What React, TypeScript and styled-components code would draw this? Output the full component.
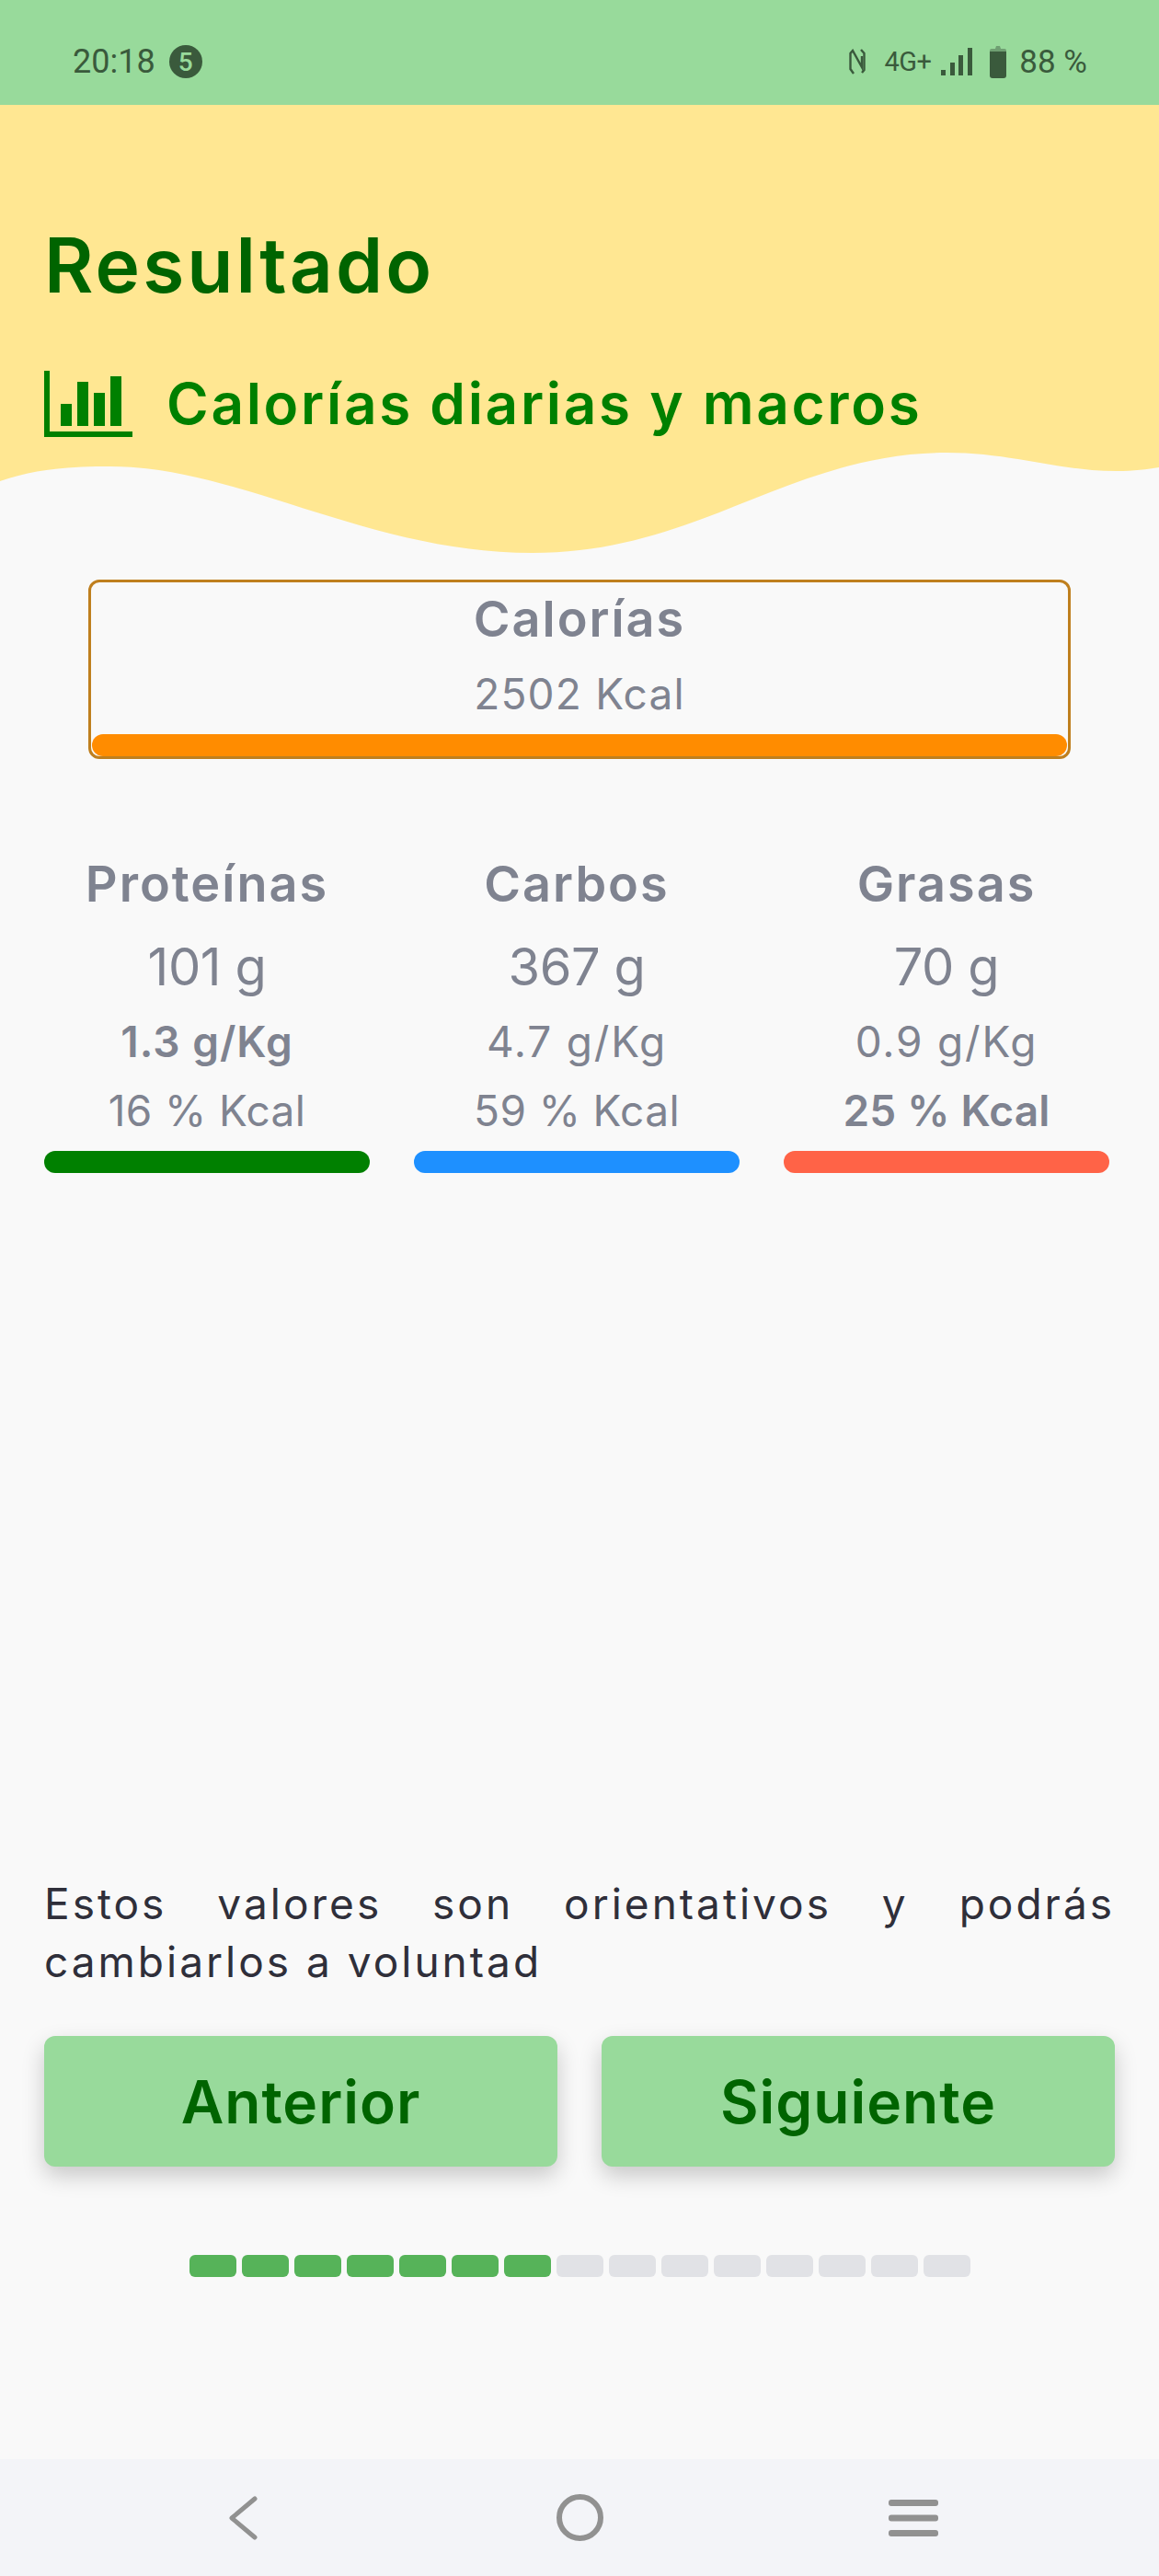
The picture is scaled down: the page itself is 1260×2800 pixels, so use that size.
import * as React from "react"
import styled, { createGlobalStyle } from "styled-components"

const GlobalStyle = createGlobalStyle`
  html, body {
    margin: 0;
    padding: 0;
    background: #f9f9f9;
  }
  * {
    box-sizing: border-box;
  }
`

const Page = styled.div`
  width: 1260px;
  height: 2800px;
  display: flex;
  flex-direction: column;
  background: #f9f9f9;
  font-family: Inter, "Liberation Sans", sans-serif;
`

const StatusBar = styled.div`
  height: 114px;
  flex: none;
  display: flex;
  justify-content: space-between;
  align-items: center;
  padding: 20px 78px 0 79px;
  background: #98da9b;
  color: #3a5a3c;
  font-family: Roboto, sans-serif;
  font-size: 36px;
`

const StatusGroup = styled.div`
  display: flex;
  align-items: center;
`

const StatusItem = styled.span<{ $left?: number }>`
  display: flex;
  align-items: center;
  margin-left: ${props => props.$left || 0}px;
`

const Badge = styled.span`
  width: 36px;
  height: 36px;
  margin-left: 15px;
  border-radius: 50%;
  display: flex;
  justify-content: center;
  align-items: center;
  background: #3a5a3c;
  color: #98da9b;
  font-size: 28px;
  font-weight: 500;
`

const NetLabel = styled(StatusItem)`
  font-size: 29px;
  letter-spacing: -0.6px;
`

const Percent = styled(StatusItem)`
  font-size: 35px;
`

const Header = styled.div`
  position: relative;
  height: 512px;
  flex: none;
  padding: 125px 48px 0;
`

const Wave = styled.svg`
  position: absolute;
  top: 0;
  left: 0;
  width: 1260px;
  height: 512px;
`

const Title = styled.h1`
  position: relative;
  margin: 0;
  font-size: 82px;
  line-height: 100px;
  font-weight: 600;
  letter-spacing: 3.1px;
  color: #006400;
`

const SubtitleRow = styled.div`
  position: relative;
  display: flex;
  align-items: center;
  gap: 37px;
  margin-top: 60px;
`

const Subtitle = styled.h2`
  margin: 0;
  font-size: 62px;
  line-height: 80px;
  font-weight: 600;
  letter-spacing: 2.7px;
  color: #008000;
`

const Body = styled.div`
  flex: 1;
  display: flex;
  flex-direction: column;
  padding: 4px 48px 0;
  color: #7f8390;
`

const CaloriesCard = styled.div`
  position: relative;
  height: 195px;
  margin: 0 48px;
  padding-top: 6px;
  display: flex;
  flex-direction: column;
  align-items: center;
  border: 3px solid #bf7f1e;
  border-radius: 12px;
`

const CardLabel = styled.div`
  font-size: 54px;
  line-height: 68px;
  font-weight: 600;
  letter-spacing: 2px;
`

const CardValue = styled.div`
  margin-top: 17px;
  font-size: 46px;
  line-height: 60px;
  letter-spacing: 1.2px;
`

const CardBar = styled.div`
  position: absolute;
  left: 1px;
  right: 1px;
  bottom: 0;
  height: 24px;
  background: #ff8c00;
  border-radius: 12px;
`

const Macros = styled.div`
  display: grid;
  grid-template-columns: repeat(3, 354px);
  gap: 48px;
  margin-top: 102px;
`

const Macro = styled.div`
  display: flex;
  flex-direction: column;
  align-items: center;
`

const MacroName = styled.div`
  font-size: 54px;
  line-height: 68px;
  font-weight: 600;
  letter-spacing: 2px;
`

const MacroGrams = styled.div`
  margin-top: 21px;
  font-size: 56px;
  line-height: 70px;
  letter-spacing: -0.4px;
`

const MacroRatio = styled.div<{ $bold?: boolean }>`
  margin-top: 9px;
  font-size: 46px;
  line-height: 75px;
  letter-spacing: ${props => (props.$bold ? 1 : 1.8)}px;
  font-weight: ${props => (props.$bold ? 600 : 400)};
`

const MacroShare = styled.div<{ $bold?: boolean }>`
  font-size: 46px;
  line-height: 75px;
  letter-spacing: ${props => (props.$bold ? 0.2 : 0.4)}px;
  font-weight: ${props => (props.$bold ? 600 : 400)};
`

const MacroBar = styled.div<{ $color: string }>`
  width: 100%;
  height: 24px;
  margin-top: 6px;
  border-radius: 12px;
  background: ${props => props.$color};
`

const Note = styled.p`
  margin: auto 0 0;
  font-size: 46px;
  line-height: 63px;
  letter-spacing: 3px;
  text-align: justify;
  color: #2f2f3a;
`

const Buttons = styled.div`
  display: grid;
  grid-template-columns: 1fr 1fr;
  gap: 48px;
  margin-top: 49px;
`

const NavButton = styled.div`
  height: 142px;
  display: flex;
  justify-content: center;
  align-items: center;
  background: #98da9b;
  border-radius: 12px;
  box-shadow: 0 10px 24px rgba(0, 0, 0, 0.2);
  color: #006400;
  font-size: 64px;
  font-weight: 600;
  letter-spacing: 1px;
`

const Progress = styled.div`
  display: flex;
  justify-content: center;
  gap: 6px;
  margin: 96px 0 198px;
`

const Step = styled.div<{ $done?: boolean }>`
  width: 51px;
  height: 24px;
  border-radius: 6px;
  background: ${props => (props.$done ? "#56b359" : "#e1e2e6")};
`

const BottomNav = styled.div`
  height: 127px;
  flex: none;
  display: flex;
  justify-content: center;
  align-items: center;
  background: #f3f4f8;
`

const NavSlot = styled.div`
  width: 363px;
  display: flex;
  justify-content: center;
`

const BackSlot = styled(NavSlot)`
  padding-right: 5px;
`

const macros = [
    { name: "Proteínas", grams: "101 g", perKg: "1.3 g/Kg", kcal: "16 % Kcal", color: "#008000", boldKg: true },
    { name: "Carbos", grams: "367 g", perKg: "4.7 g/Kg", kcal: "59 % Kcal", color: "#1e90ff" },
    { name: "Grasas", grams: "70 g", perKg: "0.9 g/Kg", kcal: "25 % Kcal", color: "#ff6347", boldKcal: true },
]

const ChartIcon = () => (
    <svg width="96" height="72" viewBox="0 0 96 72" fill="#008000">
        <rect x="0" y="0" width="6" height="72" />
        <rect x="0" y="66" width="96" height="6" />
        <rect x="18" y="36" width="12" height="24" />
        <rect x="36" y="12" width="12" height="48" />
        <rect x="54" y="24" width="12" height="36" />
        <rect x="72" y="6" width="12" height="54" />
    </svg>
)

const NfcIcon = () => (
    <svg width="18" height="28" viewBox="0 0 18 28" fill="none" stroke="#3a5a3c" strokeWidth="2.4">
        <path d="M5 27 L1.5 22 V5 L4 2 L14 20 V8" />
        <path d="M13 1 L16.5 5 V23 L14 26" />
    </svg>
)

const SignalIcon = () => (
    <svg width="34" height="30" viewBox="0 0 34 30" fill="#3a5a3c">
        <rect x="0" y="24" width="5" height="6" />
        <rect x="10" y="16" width="5" height="14" />
        <rect x="19" y="8" width="5" height="22" />
        <rect x="29" y="0" width="5" height="30" />
    </svg>
)

const BatteryIcon = () => (
    <svg width="18" height="35" viewBox="0 0 18 35">
        <path d="M0 5 Q0 3 2 3 H6 L7 0 H11 L12 3 H16 Q18 3 18 5 V8 H0 Z" fill="#6f9f72" />
        <path d="M0 6 H18 V32 Q18 35 15 35 H3 Q0 35 0 32 Z" fill="#3a5a3c" />
    </svg>
)

const BackIcon = () => (
    <svg width="32" height="48" viewBox="0 0 32 48" fill="none" stroke="#919191" strokeWidth="5" strokeLinecap="round" strokeLinejoin="round">
        <path d="M28 3 L3 24 L28 45" />
    </svg>
)

const HomeIcon = () => (
    <svg width="51" height="51" viewBox="0 0 51 51" fill="none" stroke="#919191" strokeWidth="6">
        <circle cx="25.5" cy="25.5" r="22.5" />
    </svg>
)

const MenuIcon = () => (
    <svg width="54" height="40" viewBox="0 0 54 40" fill="#919191">
        <rect x="0" y="0" width="54" height="7" rx="3" />
        <rect x="0" y="16.5" width="54" height="7" rx="3" />
        <rect x="0" y="33" width="54" height="7" rx="3" />
    </svg>
)

export default function App() {
    return (
        <Page>
            <GlobalStyle />
            <StatusBar>
                <StatusGroup>
                    <span>20:18</span>
                    <Badge>5</Badge>
                </StatusGroup>
                <StatusGroup>
                    <StatusItem><NfcIcon /></StatusItem>
                    <NetLabel $left={21}>4G+</NetLabel>
                    <StatusItem $left={11}><SignalIcon /></StatusItem>
                    <StatusItem $left={19}><BatteryIcon /></StatusItem>
                    <Percent $left={14}>88 %</Percent>
                </StatusGroup>
            </StatusBar>
            <Header>
                <Wave viewBox="0 0 1260 512" preserveAspectRatio="none">
                    <path
                        fill="#ffe792"
                        d="M0 409 C40 395 80 393 120 393 C260 393 400 487 579 487 C760 487 860 378 1029 378 C1100 378 1150 398 1214 398 C1232 398 1248 396 1260 394 V0 H0 Z"
                    />
                </Wave>
                <Title>Resultado</Title>
                <SubtitleRow>
                    <ChartIcon />
                    <Subtitle>Calorías diarias y macros</Subtitle>
                </SubtitleRow>
            </Header>
            <Body>
                <CaloriesCard>
                    <CardLabel>Calorías</CardLabel>
                    <CardValue>2502 Kcal</CardValue>
                    <CardBar />
                </CaloriesCard>
                <Macros>
                    {macros.map(m => (
                        <Macro key={m.name}>
                            <MacroName>{m.name}</MacroName>
                            <MacroGrams>{m.grams}</MacroGrams>
                            <MacroRatio $bold={m.boldKg}>{m.perKg}</MacroRatio>
                            <MacroShare $bold={m.boldKcal}>{m.kcal}</MacroShare>
                            <MacroBar $color={m.color} />
                        </Macro>
                    ))}
                </Macros>
                <Note>Estos valores son orientativos y podrás cambiarlos a voluntad</Note>
                <Buttons>
                    <NavButton>Anterior</NavButton>
                    <NavButton>Siguiente</NavButton>
                </Buttons>
                <Progress>
                    {Array.from({ length: 15 }, (_, i) => (
                        <Step key={i} $done={i < 7} />
                    ))}
                </Progress>
            </Body>
            <BottomNav>
                <BackSlot><BackIcon /></BackSlot>
                <NavSlot><HomeIcon /></NavSlot>
                <NavSlot><MenuIcon /></NavSlot>
            </BottomNav>
        </Page>
    )
}
